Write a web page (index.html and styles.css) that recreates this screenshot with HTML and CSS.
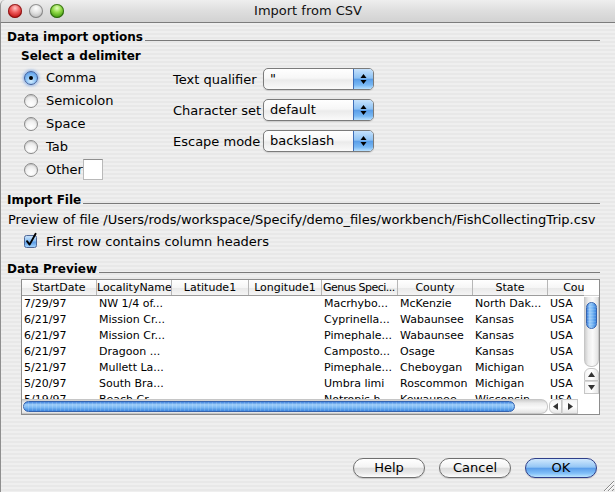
FILE: index.html
```html
<!DOCTYPE html>
<html>
<head>
<meta charset="utf-8">
<title>Import from CSV</title>
<link rel="stylesheet" href="styles.css">
</head>
<body>
<div class="window">
  <div class="titlebar">
    <div class="lights">
      <span class="light red"></span><span class="light gray"></span><span class="light green"></span>
    </div>
    <div class="title">Import from CSV</div>
    <div></div>
  </div>
  <div class="content">
    <div class="section-title first">Data import options</div>
    <div class="options">
      <div class="delims">
        <div class="sub-title">Select a delimiter</div>
        <div class="radio-list">
          <div class="radio-row"><span class="radio on"></span>Comma</div>
          <div class="radio-row"><span class="radio"></span>Semicolon</div>
          <div class="radio-row"><span class="radio"></span>Space</div>
          <div class="radio-row"><span class="radio"></span>Tab</div>
          <div class="radio-row"><span class="radio"></span>Other<span class="textfield"></span></div>
        </div>
      </div>
      <div class="fields">
        <span class="flabel">Text qualifier</span>
        <div class="select"><span class="sval">"</span><span class="stepper"><svg width="7" height="12" viewBox="0 0 7 12"><polygon points="0.5,5 3.5,1 6.5,5" fill="#000"/><polygon points="0.5,7 3.5,11 6.5,7" fill="#000"/></svg></span></div>
        <span class="flabel">Character set</span>
        <div class="select"><span class="sval">default</span><span class="stepper"><svg width="7" height="12" viewBox="0 0 7 12"><polygon points="0.5,5 3.5,1 6.5,5" fill="#000"/><polygon points="0.5,7 3.5,11 6.5,7" fill="#000"/></svg></span></div>
        <span class="flabel">Escape mode</span>
        <div class="select"><span class="sval">backslash</span><span class="stepper"><svg width="7" height="12" viewBox="0 0 7 12"><polygon points="0.5,5 3.5,1 6.5,5" fill="#000"/><polygon points="0.5,7 3.5,11 6.5,7" fill="#000"/></svg></span></div>
      </div>
    </div>

    <div class="section-title import">Import File</div>
    <div class="preview-path">Preview of file /Users/rods/workspace/Specify/demo_files/workbench/FishCollectingTrip.csv</div>
    <div class="check-row">
      <svg class="checkbox" width="16" height="16" viewBox="0 0 16 16">
        <defs>
          <linearGradient id="cbg" x1="0" y1="0" x2="0" y2="1">
            <stop offset="0" stop-color="#cfe6fc"/>
            <stop offset="0.45" stop-color="#8cc0f2"/>
            <stop offset="0.55" stop-color="#5b9ce6"/>
            <stop offset="1" stop-color="#a9d8ff"/>
          </linearGradient>
        </defs>
        <rect x="1.5" y="3.5" width="12" height="12" rx="2" fill="url(#cbg)" stroke="#4f6796"/>
        <path d="M4 9.2 L6.6 12.6 L12.6 1.8" fill="none" stroke="#000" stroke-width="1.9" stroke-linecap="round" stroke-linejoin="round"/>
      </svg>
      <span>First row contains column headers</span>
    </div>

    <div class="section-title dp">Data Preview</div>
    <div class="table">
      <div class="thead cols">
        <span>StartDate</span><span>LocalityName</span><span>Latitude1</span><span>Longitude1</span><span class="tight">Genus Speci...</span><span>County</span><span>State</span><span>Country</span>
      </div>
      <div class="corner-top"></div>
      <div class="tbody">
        <div class="row cols"><span>7/29/97</span><span>NW 1/4 of...</span><span></span><span></span><span>Macrhybo...</span><span>McKenzie</span><span>North Dak...</span><span>USA</span></div>
        <div class="row cols"><span>6/21/97</span><span>Mission Cr...</span><span></span><span></span><span>Cyprinella...</span><span>Wabaunsee</span><span>Kansas</span><span>USA</span></div>
        <div class="row cols"><span>6/21/97</span><span>Mission Cr...</span><span></span><span></span><span>Pimephale...</span><span>Wabaunsee</span><span>Kansas</span><span>USA</span></div>
        <div class="row cols"><span>6/21/97</span><span>Dragoon ...</span><span></span><span></span><span>Camposto...</span><span>Osage</span><span>Kansas</span><span>USA</span></div>
        <div class="row cols"><span>5/21/97</span><span>Mullett La...</span><span></span><span></span><span>Pimephale...</span><span>Cheboygan</span><span>Michigan</span><span>USA</span></div>
        <div class="row cols"><span>5/20/97</span><span>South Bra...</span><span></span><span></span><span>Umbra limi</span><span>Roscommon</span><span>Michigan</span><span>USA</span></div>
        <div class="row cols"><span>5/19/97</span><span>Beach Cr...</span><span></span><span></span><span>Notropis h...</span><span>Kewaunee</span><span>Wisconsin</span><span>USA</span></div>
      </div>
      <div class="vscroll">
        <div class="vtrack"><div class="vthumb"></div></div>
        <div class="varrow up"><svg width="7" height="5" viewBox="0 0 7 5"><polygon points="0,5 3.5,0 7,5" fill="#333"/></svg></div>
        <div class="varrow down"><svg width="7" height="5" viewBox="0 0 7 5"><polygon points="0,0 3.5,5 7,0" fill="#333"/></svg></div>
      </div>
      <div class="hscroll">
        <div class="htrack"><div class="hthumb"></div></div>
        <div class="harrow left"><svg width="5" height="7" viewBox="0 0 5 7"><polygon points="5,0 0,3.5 5,7" fill="#333"/></svg></div>
        <div class="harrow right"><svg width="5" height="7" viewBox="0 0 5 7"><polygon points="0,0 5,3.5 0,7" fill="#333"/></svg></div>
      </div>
      <div class="corner-bottom"></div>
    </div>

    <div class="buttons">
      <button class="btn">Help</button>
      <button class="btn">Cancel</button>
      <button class="btn default">OK</button>
    </div>
  </div>
  <svg class="grip" width="11" height="11" viewBox="0 0 11 11">
    <path d="M11 1 L1 11 M11 5 L5 11 M11 9 L9 11" stroke="#8a8a8a" stroke-width="1"/>
    <path d="M11 2 L2 11 M11 6 L6 11" stroke="#ffffff" stroke-width="1"/>
  </svg>
</div>
</body>
</html>
```

FILE: styles.css
```css
* { box-sizing: border-box; }

html, body {
  margin: 0;
  padding: 0;
}

body {
  width: 615px;
  height: 492px;
  overflow: hidden;
  font-family: "DejaVu Sans", "Liberation Sans", sans-serif;
  font-size: 13px;
  color: #000;
  background: #ececec;
}

.window {
  position: relative;
  width: 615px;
  height: 492px;
  display: flex;
  flex-direction: column;
}

/* ---------- title bar ---------- */
.titlebar {
  height: 23px;
  flex: none;
  display: grid;
  grid-template-columns: 1fr auto 1fr;
  align-items: center;
  border-bottom: 1px solid #7c7c7c;
  border-left: 1px solid #9a9a9a;
  border-top-left-radius: 5px;
  background: linear-gradient(#eeeeee, #dedede 50%, #d2d2d2);
}

.lights {
  display: flex;
  gap: 7px;
  padding-left: 7px;
}

.light {
  width: 14px;
  height: 14px;
  border-radius: 50%;
  display: block;
}

.light.red {
  background: radial-gradient(circle at 50% 30%, #ffc4c4 0, #f06060 35%, #c81e1e 70%, #8a0c0c 100%);
  box-shadow: inset 0 0 0 1px rgba(110, 10, 10, 0.7);
}

.light.gray {
  background: radial-gradient(circle at 50% 30%, #ffffff 0, #e2e2e2 40%, #bdbdbd 75%, #8e8e8e 100%);
  box-shadow: inset 0 0 0 1px rgba(90, 90, 90, 0.6);
}

.light.green {
  background: radial-gradient(circle at 50% 30%, #e4ffc0 0, #94dc4a 35%, #4fa417 70%, #2c6a08 100%);
  box-shadow: inset 0 0 0 1px rgba(30, 80, 10, 0.7);
}

.title {
  font-size: 13px;
  line-height: 22px;
  color: #111;
}

/* ---------- content ---------- */
.content {
  flex: 1;
  display: flex;
  flex-direction: column;
  padding: 0 15px 0 6px;
  border-left: 1px solid #8f8f8f;
  background: repeating-linear-gradient(#efefef 0 2px, #e8e8e8 2px 4px);
}

.section-title {
  display: flex;
  height: 15px;
  line-height: 15px;
  font-size: 12px;
  font-weight: bold;
  white-space: nowrap;
}

.section-title::after {
  content: "";
  flex: 1;
  height: 0;
  border-top: 1px solid #7a7a7a;
  margin: 10px 0 0 2px;
}

.section-title.first { margin-top: 7px; }
.section-title.import { margin-top: 12px; }
.section-title.dp { margin-top: 11px; }

/* options */
.options {
  display: flex;
  margin-top: 4px;
}

.delims {
  width: 166px;
  padding-left: 14px;
}

.sub-title {
  height: 15px;
  line-height: 15px;
  font-size: 12px;
  font-weight: bold;
}

.radio-list {
  margin-top: 2px;
  padding-left: 3px;
}

.radio-row {
  height: 23px;
  display: flex;
  align-items: center;
}

.radio {
  width: 14px;
  height: 14px;
  border-radius: 50%;
  margin-right: 8px;
  border: 1px solid #8a8a8a;
  background: radial-gradient(circle at 50% 75%, #ffffff 0, #f4f4f4 40%, #d6d6d6 100%);
  box-shadow: inset 0 1px 1px rgba(0, 0, 0, 0.15);
  position: relative;
}

.radio.on {
  border-color: #3e5e9c;
  background: radial-gradient(circle at 50% 75%, #d2ecff 0, #8cc2f4 45%, #4a8ee2 100%);
  box-shadow: 0 0 3px 1px rgba(80, 140, 230, 0.6);
}

.radio.on::after {
  content: "";
  position: absolute;
  left: 4px;
  top: 4px;
  width: 4px;
  height: 4px;
  border-radius: 50%;
  background: #000;
}

.textfield {
  width: 20px;
  height: 21px;
  background: #fff;
  border: 1px solid #b9b9b9;
  border-top-color: #8f8f8f;
}

.fields {
  margin-top: 19px;
  display: grid;
  grid-template-columns: 90px 111px;
  row-gap: 9px;
  align-items: center;
  align-self: flex-start;
}

.flabel {
  white-space: nowrap;
}

.select {
  height: 22px;
  display: flex;
  border: 1px solid #7b7b7b;
  border-radius: 5px;
  overflow: hidden;
  background: linear-gradient(#ffffff, #f7f7f7 45%, #ebebeb 55%, #fafafa);
  box-shadow: 0 1px 1px rgba(0, 0, 0, 0.12);
}

.sval {
  flex: 1;
  padding-left: 6px;
  line-height: 20px;
}

.stepper {
  width: 20px;
  display: flex;
  align-items: center;
  justify-content: center;
  border-left: 1px solid #3f6fb8;
  background: linear-gradient(#c6e2fc, #8ec2f4 45%, #5a9ee8 52%, #78b8f4 80%, #b8e0ff);
}

/* import file */
.preview-path {
  margin-top: 4px;
  padding-left: 1px;
  line-height: 15px;
  height: 15px;
  white-space: nowrap;
}

.check-row {
  margin-top: 4px;
  height: 20px;
  display: flex;
  align-items: center;
  padding-left: 16px;
}

.checkbox {
  margin-right: 7px;
  margin-top: -3px;
}

/* ---------- table ---------- */
.table {
  margin: 2px 0 0 14px;
  width: 579px;
  height: 136px;
  border: 1px solid #8d8d8d;
  background: #fff;
  display: grid;
  grid-template-columns: 1fr 15px;
  grid-template-rows: 16px 103px 15px;
}

.cols {
  display: grid;
  grid-template-columns: 75px 75px 77px 73px 76px 75px 75px 75px;
}

.thead {
  overflow: hidden;
  font-size: 11px;
  border-bottom: 1px solid #9c9c9c;
  background: linear-gradient(#ffffff, #f6f6f6 50%, #e9e9e9 55%, #f5f5f5);
}

.thead span {
  line-height: 15px;
  text-align: center;
  white-space: nowrap;
  overflow: hidden;
  border-right: 1px solid #b7b7b7;
}

.thead span.tight {
  letter-spacing: -0.5px;
  text-align: left;
  padding-left: 1px;
}

.corner-top {
  background: #fff;
  border-bottom: 1px solid #d0d0d0;
}

.tbody {
  overflow: hidden;
}

.row {
  height: 16px;
  font-size: 11px;
  line-height: 16px;
}

.row span {
  white-space: nowrap;
  overflow: hidden;
  padding-left: 2px;
}

/* vertical scrollbar */
.vscroll {
  display: flex;
  flex-direction: column;
  align-items: stretch;
  padding: 1px 0 5px 0;
  background: #fff;
}

.vtrack {
  height: 71px;
  border-radius: 0 0 7px 7px;
  background: linear-gradient(to right, #cfcfcf, #ececec 25%, #fafafa 60%, #e2e2e2);
  padding: 5px 1px 0 1px;
  border: 1px solid #c6c6c6;
  border-top: none;
}

.vthumb {
  height: 27px;
  border-radius: 7px;
  border: 1px solid #3563ae;
  background:
    repeating-linear-gradient(rgba(255, 255, 255, 0.12) 0 1px, rgba(0, 0, 0, 0) 1px 3px),
    linear-gradient(to right, #3f82dc, #9ccdfa 30%, #7ab8f4 60%, #3d86de);
}

.varrow {
  height: 13px;
  display: flex;
  align-items: center;
  justify-content: center;
  border: 1px solid #c6c6c6;
  background: linear-gradient(to right, #f4f4f4, #ffffff 50%, #e6e6e6);
}

.varrow.up {
  margin-top: 1px;
  border-radius: 6px 6px 0 0;
}

.varrow.down {
  border-top: 1px solid #d6d6d6;
}

/* horizontal scrollbar */
.hscroll {
  display: flex;
  align-items: stretch;
  padding-right: 6px;
  background: #fff;
}

.htrack {
  flex: 1;
  border-radius: 0 7px 7px 0;
  background: linear-gradient(#cfcfcf, #ececec 25%, #fafafa 60%, #e2e2e2);
  padding: 1px 0 1px 1px;
  border: 1px solid #c6c6c6;
  border-left: none;
}

.hthumb {
  width: 492px;
  height: 100%;
  border-radius: 7px;
  border: 1px solid #3563ae;
  background:
    repeating-linear-gradient(to right, rgba(255, 255, 255, 0.14) 0 1px, rgba(0, 0, 0, 0) 1px 4px),
    linear-gradient(#3f82dc, #9ccdfa 30%, #7ab8f4 60%, #3d86de);
}

.harrow {
  width: 13px;
  display: flex;
  align-items: center;
  justify-content: center;
  border: 1px solid #c6c6c6;
  background: linear-gradient(#f4f4f4, #ffffff 50%, #e6e6e6);
}

.harrow.left {
  margin-left: 1px;
  border-radius: 6px 0 0 6px;
}

.harrow.right {
  width: 16px;
  border-left: 1px solid #d6d6d6;
}

.corner-bottom {
  background: #fff;
}

/* ---------- buttons ---------- */
.buttons {
  margin-top: auto;
  display: flex;
  justify-content: flex-end;
  gap: 14px;
  padding: 0 3px 14px 0;
}

.btn {
  width: 72px;
  height: 20px;
  padding: 0;
  margin: 0;
  font-family: "DejaVu Sans", "Liberation Sans", sans-serif;
  font-size: 13px;
  line-height: 18px;
  color: #000;
  border: 1px solid #6f6f6f;
  border-radius: 10px;
  background: linear-gradient(#ffffff, #f4f4f4 45%, #dcdcdc 52%, #ebebeb 80%, #ffffff);
  box-shadow: 0 1px 1px rgba(0, 0, 0, 0.15);
}

.btn.default {
  border-color: #2f3f8a;
  background: linear-gradient(#d0e8fd, #94c6f5 45%, #5b9eea 52%, #82c0f8 80%, #bde6ff);
}

.grip {
  position: absolute;
  right: 1px;
  bottom: 1px;
}
```
